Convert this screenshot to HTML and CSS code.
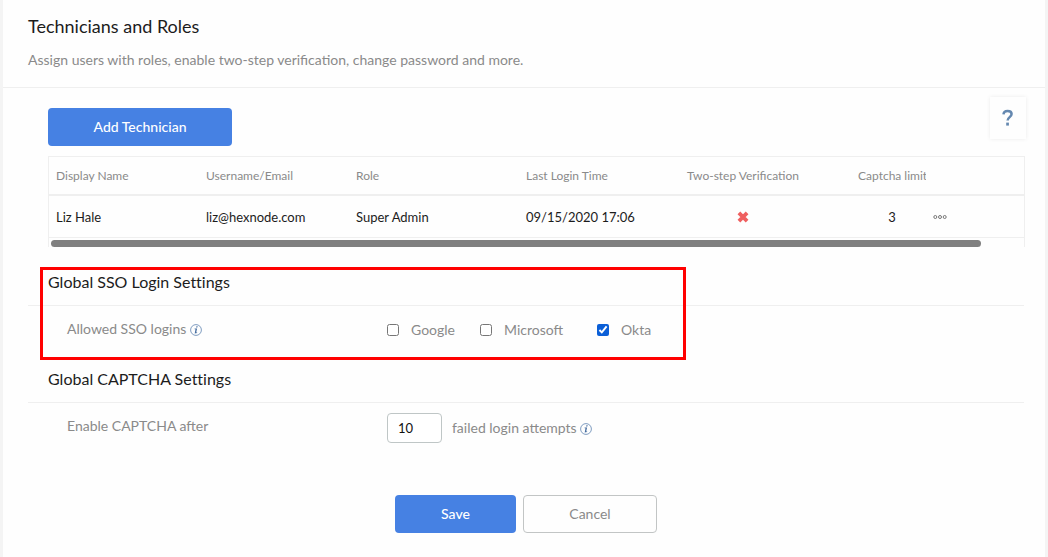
FILE: index.html
```html
<!DOCTYPE html>
<html lang="en">
<head>
<meta charset="utf-8">
<title>Technicians and Roles</title>
<link rel="stylesheet" href="styles.css">
</head>
<body>
<main class="panel">
  <header class="page-header">
    <h1 class="page-title">Technicians and Roles</h1>
    <p class="page-subtitle">Assign users with roles, enable two-step verification, change password and more.</p>
  </header>

  <div class="toolbar">
    <button type="button" class="btn btn-primary btn-add">Add Technician</button>
    <button type="button" class="help" aria-label="Help">
      <svg width="12" height="18" viewBox="0 0 12 18" aria-hidden="true"><path d="M1.500 5.400C1.600 3 3.300 1.900 5.600 1.900c2.500 0 4 1.300 4 3.200 0 3-4 3.100-4 6.400" fill="none" stroke="#6488b0" stroke-width="2.500"/><path d="M4.200 13.600h2.700v3h-2.700z" fill="#6488b0"/></svg>
    </button>
  </div>

  <div class="table-wrap">
    <table class="tech-table">
      <colgroup>
        <col class="c-name"><col class="c-name"><col class="c-role"><col class="c-time"><col class="c-two"><col class="c-limit"><col>
      </colgroup>
      <thead>
        <tr><th>Display Name</th><th>Username/Email</th><th>Role</th><th>Last Login Time</th><th class="center">Two-step Verification</th><th class="clip">Captcha limit</th><th></th></tr>
      </thead>
      <tbody>
        <tr>
          <td>Liz Hale</td><td>liz@hexnode.com</td><td>Super Admin</td><td>09/15/2020 17:06</td>
          <td class="center"><svg class="cross" width="12" height="12" viewBox="0 0 12 12" role="img" aria-label="Disabled"><path d="M1.900 1.900l8.200 8.200M10.100 1.900L1.900 10.100" stroke="#ef5f5f" stroke-width="3.800"/></svg></td>
          <td class="center">3</td>
          <td class="more-cell"><button type="button" class="more" aria-label="More actions"><svg width="14" height="6" viewBox="0 0 14 6" aria-hidden="true"><g fill="none" stroke="#777" stroke-width="1"><circle cx="2.300" cy="3" r="1.500"/><circle cx="7" cy="3" r="1.500"/><circle cx="11.700" cy="3" r="1.500"/></g></svg></button></td>
        </tr>
      </tbody>
    </table>
    <div class="scroll-thumb"></div>
  </div>

  <section class="settings highlighted">
    <h2 class="settings-title">Global SSO Login Settings</h2>
    <div class="settings-row">
      <div class="settings-label">Allowed SSO logins
        <svg class="info" width="12" height="12" viewBox="0 0 12 12" aria-hidden="true"><circle cx="6" cy="6" r="5.400" fill="none" stroke="#7f9cc0" stroke-width="1"/><path d="M6.400 2.200h1.300l-.3 1.300H6.100zM4.600 4.500h2.500L6.200 8.600l.9-.3v.6L4.700 9.600 5.500 5.300h-.9z" fill="#466da0"/></svg>
      </div>
      <div class="checks">
        <label class="check"><input type="checkbox">Google</label>
        <label class="check"><input type="checkbox">Microsoft</label>
        <label class="check"><input type="checkbox" checked>Okta</label>
      </div>
    </div>
  </section>

  <section class="settings">
    <h2 class="settings-title">Global CAPTCHA Settings</h2>
    <div class="settings-row">
      <label class="settings-label" for="attempts">Enable CAPTCHA after</label>
      <div class="attempts">
        <input class="number" id="attempts" type="text" value="10">
        <span class="suffix">failed login attempts
          <svg class="info" width="12" height="12" viewBox="0 0 12 12" aria-hidden="true"><circle cx="6" cy="6" r="5.400" fill="none" stroke="#7f9cc0" stroke-width="1"/><path d="M6.400 2.200h1.300l-.3 1.300H6.100zM4.600 4.500h2.500L6.200 8.600l.9-.3v.6L4.700 9.600 5.500 5.300h-.9z" fill="#466da0"/></svg>
        </span>
      </div>
    </div>
  </section>

  <footer class="actions">
    <button type="button" class="btn btn-primary btn-save">Save</button>
    <button type="button" class="btn btn-outline">Cancel</button>
  </footer>
</main>
</body>
</html>
```
FILE: styles.css
```css
*, *::after { box-sizing: border-box; }

body {
  margin: 0;
  background: #f4f4f4;
  color: #1c1c1c;
  font: 14px/20px Lato, sans-serif;
}

button, input { font: inherit; margin: 0; }

.panel {
  min-height: 100vh;
  margin: 0 3px;
  background: #fefefe;
}

.page-header {
  padding: 14px 25px 17px;
  border-bottom: 1px solid #efefef;
}

.page-title {
  margin: 0 0 12px;
  font-size: 18px;
  line-height: 24px;
  font-weight: 400;
}

.page-subtitle { margin: 0; color: #8a8a8a; }

.toolbar {
  display: flex;
  justify-content: space-between;
  align-items: flex-start;
  padding: 9px 19px 0 45px;
}

.btn {
  height: 38px;
  padding: 0;
  border: 0;
  border-radius: 4px;
  text-align: center;
}

.btn-primary { background: #4681e3; color: #fff; font-weight: 500; }
.btn-add { width: 184px; margin-top: 11px; }
.btn-save { width: 121px; }
.btn-outline { width: 134px; background: #fefefe; border: 1px solid #c2c5c5; color: #8a8a8a; }

.help {
  display: flex;
  align-items: center;
  justify-content: center;
  width: 36px;
  height: 42px;
  padding: 0;
  border: 0;
  background: #fefefe;
  box-shadow: 0 0 4px #ececec;
}

.table-wrap {
  margin: 10px 20px 0 45px;
  border: solid #efefef;
  border-width: 1px 1px 0;
}

.tech-table {
  width: 100%;
  table-layout: fixed;
  border-collapse: separate;
  border-spacing: 0;
}

.c-name { width: 150px; }
.c-role { width: 170px; }
.c-time { width: 116px; }
.c-two { width: 216px; }
.c-limit { width: 82px; }

.tech-table th, .tech-table td {
  padding: 0 7px;
  text-align: left;
  white-space: nowrap;
}

.tech-table th {
  height: 39px;
  border-bottom: 2px solid #efefef;
  color: #8a8a8a;
  font-size: 12px;
  font-weight: 400;
}

.tech-table td {
  height: 42px;
  border-bottom: 1px solid #efefef;
  font-size: 13px;
}

.tech-table .center { text-align: center; }

.tech-table .clip {
  overflow: clip;
  overflow-clip-margin: content-box;
}

.tech-table .more-cell { padding: 0; }

.cross { display: block; margin: 0 auto; }
.more { display: block; padding: 0; border: 0; background: none; }
.more svg { display: block; }

.scroll-thumb {
  width: 95.4%;
  height: 7px;
  margin: 2px 2px 1px;
  border-radius: 4px;
  background: #808080;
}

.settings { position: relative; margin: 0 21px 0 25px; }

.settings-title {
  margin: 0;
  padding: 23px 20px 12px;
  border-bottom: 1px solid #efefef;
  font-size: 16px;
  line-height: 22px;
  font-weight: 400;
  font-variant-ligatures: none;
}

.settings-row {
  display: grid;
  grid-template-columns: 320px 1fr;
  height: 39px;
  padding: 10px 0 0 39px;
  color: #8a8a8a;
}

.settings-label { padding-top: 3px; }
.info { vertical-align: -2px; }

.highlighted::after {
  content: "";
  position: absolute;
  top: 19px;
  left: 12px;
  width: 646px;
  height: 93px;
  border: 3px solid #f00;
  pointer-events: none;
}

.checks {
  display: grid;
  grid-template-columns: 93px 117px auto;
  justify-content: start;
  height: 28px;
  align-items: center;
}

.check { display: flex; align-items: center; gap: 12px; }
.check input { width: 12px; height: 12px; accent-color: #0b5fd7; }

.attempts { display: flex; align-items: center; gap: 10px; height: 30px; }

.number {
  width: 55px;
  height: 30px;
  padding: 0 10px;
  border: 1px solid #bfc6c6;
  border-radius: 4px;
  background: #fff;
  color: #111;
  font-size: 13px;
}

.actions {
  display: flex;
  justify-content: center;
  gap: 7px;
  padding: 53px 0 24px 4px;
}
```
